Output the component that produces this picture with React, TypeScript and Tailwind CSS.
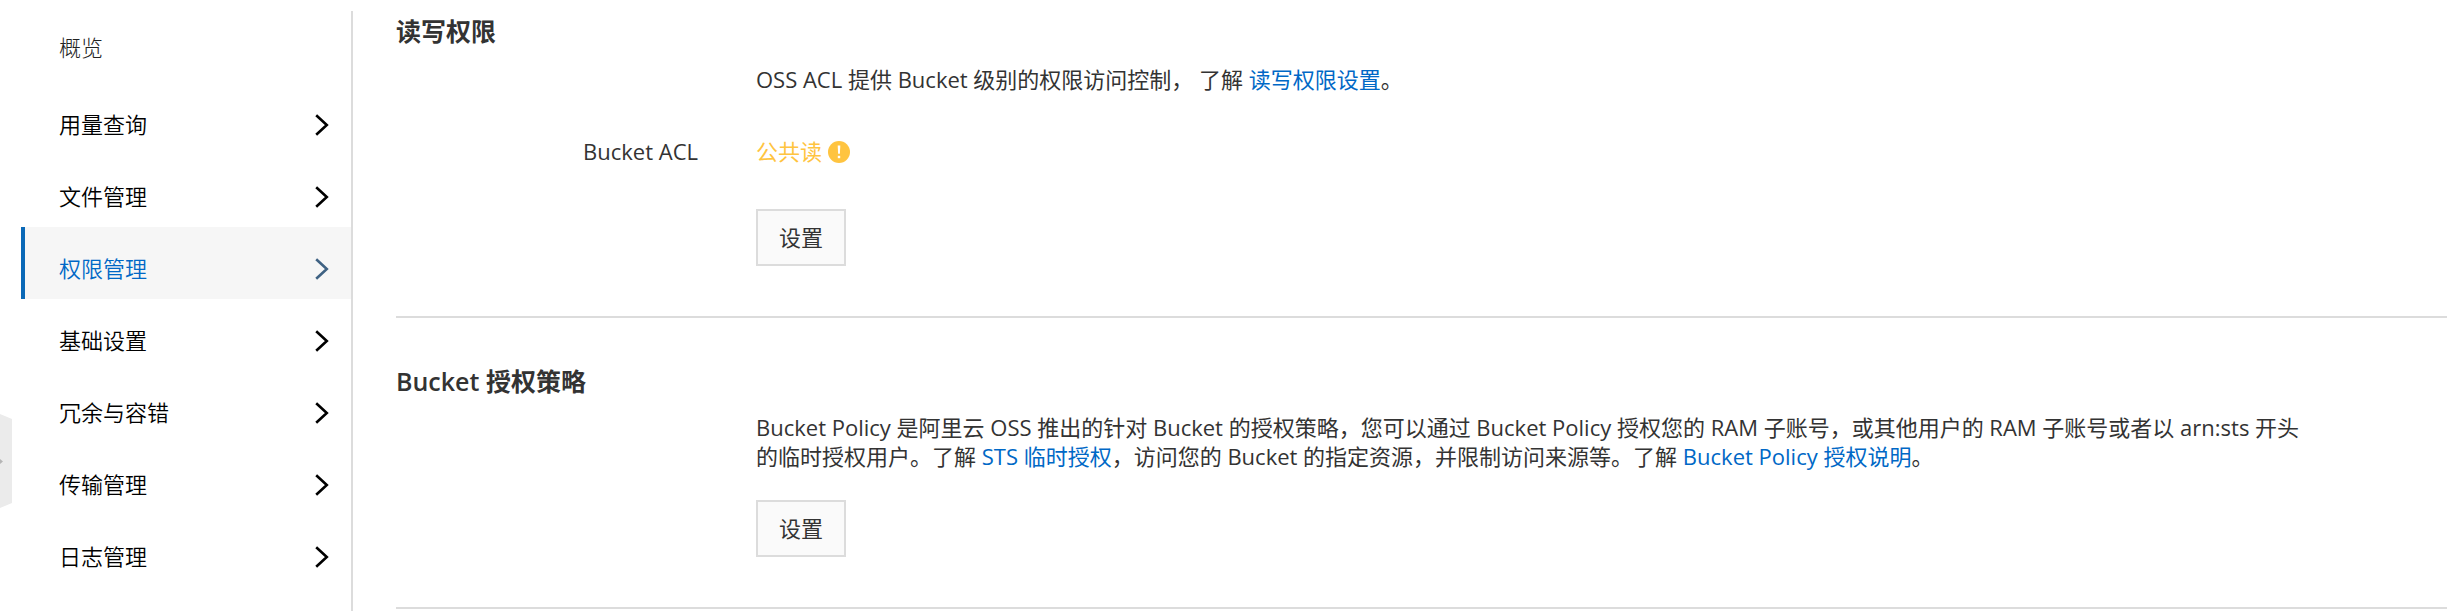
import React from 'react';

interface MenuItem {
    label: string;
    active?: boolean;
}

const menuItems: MenuItem[] = [
    { label: '用量查询' },
    { label: '文件管理' },
    { label: '权限管理', active: true },
    { label: '基础设置' },
    { label: '冗余与容错' },
    { label: '传输管理' },
    { label: '日志管理' },
];

const Chevron: React.FC = () => (
    <svg className="h-[22px] w-[14px]" viewBox="0 0 14 22" fill="none" stroke="currentColor" strokeWidth="2.6" aria-hidden="true">
        <path d="M1.2 1.2L11.8 11L1.2 20.8" />
    </svg>
);

const WarningIcon: React.FC = () => (
    <svg className="size-[22px]" viewBox="0 0 22 22" aria-hidden="true">
        <circle cx="11" cy="11" r="11" fill="#ffc440" />
        <path d="M9.7 4.5h2.6l-.4 8.3h-1.8z" fill="#fff" />
        <rect x="9.8" y="14.8" width="2.4" height="2.4" fill="#fff" />
    </svg>
);

const DocLink: React.FC<{ children: React.ReactNode }> = ({ children }) => (
    <a href="#docs" className="text-[#0068c6]">{children}</a>
);

const SettingButton: React.FC = () => (
    <button type="button" className="h-[57px] border-2 border-[#dcdcdc] bg-[#fafafa] px-[21px]">设置</button>
);

const Section: React.FC<{ title: string; children: React.ReactNode }> = ({ title, children }) => (
    <section className="border-b-2 border-[#dcdcdc] pt-[45px] pb-[50px]">
        <h2 className="text-[25px] leading-[36px] font-semibold">{title}</h2>
        {children}
    </section>
);

const Row: React.FC<{ label?: string; children: React.ReactNode }> = ({ label, children }) => (
    <div className="flex">
        <div className="w-[302px] shrink-0 text-right">{label}</div>
        <div className="ml-[58px] flex-1 pr-[130px]">{children}</div>
    </div>
);

const Sidebar: React.FC = () => (
    <nav className="mt-[11px] w-[332px] shrink-0 border-r-2 border-[#dcdcdc] text-black">
        <a href="#overview" className="flex h-[72px] items-center pl-[38px] font-light text-[#222]">概览</a>
        {menuItems.map(item => (
            <a
                key={item.label}
                href="#menu"
                className={`flex h-[72px] items-center justify-between border-l-4 pt-[11px] pr-[22px] pl-[34px] font-[350] ${item.active ? 'border-[#0b69b7] bg-[#f6f6f6] text-[#0068c6]' : 'border-transparent'}`}
            >
                <span>{item.label}</span>
                <span className={item.active ? 'text-[#3f6283]' : ''}><Chevron /></span>
            </a>
        ))}
    </nav>
);

const App: React.FC = () => (
    <div className="relative flex min-h-screen overflow-hidden bg-white pl-[21px] font-['Open_Sans','Noto_Sans_CJK_SC',sans-serif] text-[22px] leading-[29px] text-[#333]">
        <button type="button" aria-label="展开" className="absolute top-[414px] left-0">
            <svg className="h-[94px] w-3" viewBox="0 0 12 94" aria-hidden="true">
                <path d="M0 0L12 5V89L0 94Z" fill="#ebebeb" />
                <path d="M0 45L3 47.500L0 50Z" fill="#b5b5b5" />
            </svg>
        </button>
        <Sidebar />
        <main className="-mt-8 ml-[43px] flex-1">
            <Section title="读写权限">
                <div className="mt-4">
                    <Row>
                        OSS ACL 提供 Bucket 级别的权限访问控制， 了解 <DocLink>读写权限设置</DocLink>。
                    </Row>
                </div>
                <div className="mt-[43px]">
                    <Row label="Bucket ACL">
                        <span className="flex items-center gap-[6px] text-[#ffc440]">公共读 <WarningIcon /></span>
                    </Row>
                </div>
                <div className="mt-[43px]">
                    <Row><SettingButton /></Row>
                </div>
            </Section>
            <Section title="Bucket 授权策略">
                <div className="mt-[14px]">
                    <Row>
                        Bucket Policy 是阿里云 OSS 推出的针对 Bucket 的授权策略，您可以通过 Bucket Policy 授权您的 RAM 子账号，或其他用户的 RAM 子账号或者以 arn:sts 开头的临时授权用户。了解 <DocLink>STS 临时授权</DocLink>，访问您的 Bucket 的指定资源，并限制访问来源等。了解 <DocLink>Bucket Policy 授权说明</DocLink>。
                    </Row>
                </div>
                <div className="mt-[29px]">
                    <Row><SettingButton /></Row>
                </div>
            </Section>
        </main>
    </div>
);

export default App;
